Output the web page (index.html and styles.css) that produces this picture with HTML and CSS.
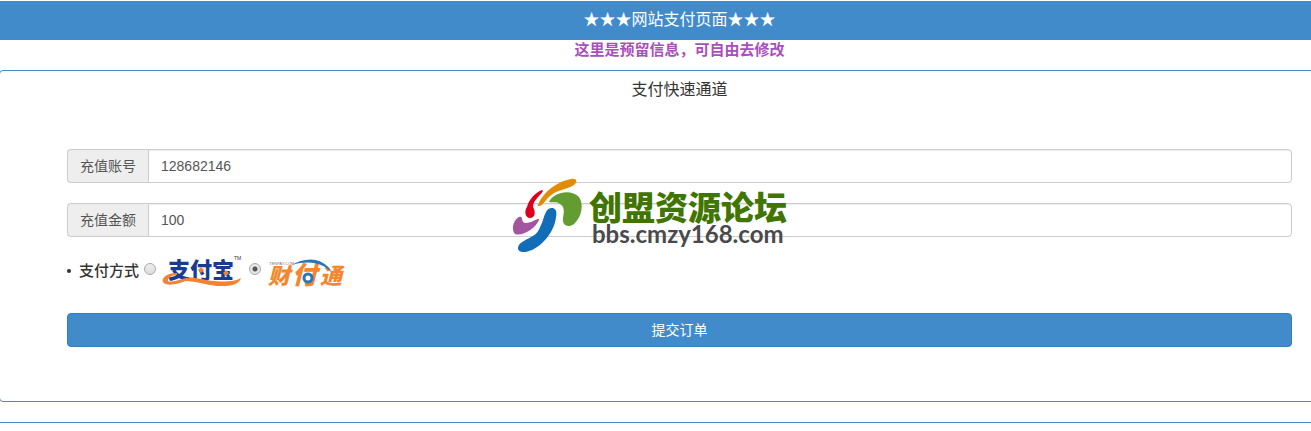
FILE: index.html
```html
<!DOCTYPE html>
<html lang="zh-CN">
<head>
  <meta charset="UTF-8">
  <meta name="viewport" content="width=device-width, initial-scale=1.0">
  <title>网站支付页面</title>
  <link rel="stylesheet" href="styles.css">
</head>
<body>
  <div class="page">
    <header class="top-bar">★★★网站支付页面★★★</header>
    <p class="notice">这里是预留信息，可自由去修改</p>
    <main class="panel">
      <h1 class="panel-title">支付快速通道</h1>
      <form class="pay-form">
        <div class="input-group">
          <label class="input-addon" for="account">充值账号</label>
          <input class="form-control" type="text" id="account" name="account" value="128682146">
        </div>
        <div class="input-group">
          <label class="input-addon" for="money">充值金额</label>
          <input class="form-control" type="text" id="money" name="money" value="100">
        </div>
        <div class="pay-type" role="radiogroup" aria-labelledby="pay-label">
          <span class="pay-dot"></span>
          <span class="pay-label" id="pay-label">支付方式</span>
          <input class="pay-radio" type="radio" name="type" value="alipay" id="alipay">
          <label class="pay-logo" for="alipay">
            <svg width="84" height="34" viewBox="0 0 84 34" role="img" aria-label="支付宝">
              <text class="alipay-text" x="8" y="24">支付宝</text>
              <path d="M17 19C7 19 1 24 3 28C6 33 19 30 25 27C37 27 51 33 65 32C75 32 80 28 81 24C74 28 65 28 54 27C43 26 33 22 26 24C19 26 9 29 8 27C7 24 12 21 17 21Z" fill="#f58233"/>
              <path d="M41 13l3 3-3 3-3-3zM66 16l3 3-3 3-3-3z" fill="#f58233"/>
              <text class="tm-text" x="74" y="6">TM</text>
            </svg>
          </label>
          <input class="pay-radio" type="radio" name="type" value="tenpay" id="tenpay" checked>
          <label class="pay-logo" for="tenpay">
            <svg width="84" height="34" viewBox="0 0 84 34" role="img" aria-label="财付通">
              <text class="tenpay-text" y="30"><tspan x="3">财</tspan><tspan class="tenpay-big" x="27">付</tspan><tspan x="55">通</tspan></text>
              <text class="tenpay-url" x="4" y="11">TENPAY.COM</text>
              <path d="M27 11C39 3 59 2 67 19C58 9 45 6 27 11Z" fill="#2b76ba"/>
              <circle cx="43" cy="24" r="4" fill="#fff" stroke="#2b76ba" stroke-width="3"/>
            </svg>
          </label>
        </div>
        <button class="submit-btn" type="submit">提交订单</button>
      </form>
    </main>
    <div class="panel-next"></div>
    <div class="watermark">
      <svg width="290" height="80" viewBox="0 0 290 80" role="img" aria-label="创盟资源论坛">
        <path d="M26 28C30 17 43 5 59 2C65 1 66 5 62 8C55 13 46 12 38 19C33 23 31 29 27 29C25 29 25 29 26 28Z" fill="#e48b06"/>
        <path d="M37 25C42 14 60 12 67 20C72 27 70 40 62 47C55 52 50 47 51 41C52 35 53 30 48 27C44 24 41 26 37 25Z" fill="#639d32"/>
        <path d="M30 13C24 15 17 22 15 30C12 34 13 41 18 41C23 41 24 35 21 30C21 23 29 18 31 14Z" fill="#de001c"/>
        <path d="M7 40C1 43 -1 53 3 57C10 60 24 51 27 43C28 39 21 46 14 46C8 46 12 38 7 40Z" fill="#a256a0"/>
        <path d="M41 31C35 30 33 36 31 43C28 51 26 57 19 60C14 63 6 66 6 71C6 76 13 76 20 73C33 67 43 52 44 40C45 35 44 32 41 31Z" fill="#126db9"/>
        <text class="mark-name" x="77" y="43">创盟资源论坛</text>
        <text class="mark-url" x="80" y="66">bbs.cmzy168.com</text>
      </svg>
    </div>
  </div>
</body>
</html>
```
FILE: styles.css
```css
* { box-sizing: border-box; }
html, body {
  margin: 0;
  padding: 0;
}
body {
  overflow: hidden;
  background: #fff;
  color: #333;
  font-family: "Liberation Sans", "Noto Sans CJK SC", sans-serif;
  font-size: 14px;
  line-height: 20px;
}
.page {
  position: relative;
  width: calc(100% + 48px);
  padding-top: 1px;
}
.top-bar {
  padding: 9px 0 10px;
  background: #428bca;
  color: #fff;
  font-size: 16px;
  text-align: center;
}
.notice {
  margin: 0;
  padding-bottom: 10px;
  color: #a94fbd;
  font-size: 15px;
  font-weight: bold;
  text-align: center;
}
.panel {
  margin: 0 -1px 20px;
  padding: 9px 67px 54px;
  border: 1px solid #428bca;
  border-radius: 4px;
}
.panel-title {
  margin: 0 0 49px;
  font-size: 16px;
  font-weight: normal;
  text-align: center;
}
.pay-form {
  display: flex;
  flex-direction: column;
}
.input-group {
  display: flex;
  height: 34px;
  margin-bottom: 20px;
}
.input-addon {
  padding: 6px 12px;
  background: #eee;
  border: 1px solid #ccc;
  border-right: 0;
  border-radius: 4px 0 0 4px;
  color: #555;
}
.form-control {
  flex: 1;
  min-width: 0;
  padding: 6px 12px;
  background: #fff;
  border: 1px solid #ccc;
  border-radius: 0 4px 4px 0;
  box-shadow: inset 0 1px 1px rgba(0,0,0,0.075);
  color: #555;
  font: inherit;
}
.pay-type {
  display: flex;
  align-items: center;
  height: 28px;
  margin-bottom: 28px;
}
.pay-dot {
  width: 4px;
  height: 4px;
  margin-right: 8px;
  border-radius: 50%;
  background: #333;
}
.pay-label {
  margin-right: 5px;
  font-size: 15px;
  font-weight: 500;
}
.pay-radio {
  appearance: none;
  width: 12px;
  height: 12px;
  margin: 0 4px 4px 0;
  border: 1px solid #aaa;
  border-radius: 50%;
  background: linear-gradient(#eee, #ddd);
}
.pay-radio:checked {
  background: radial-gradient(circle, #555 0 2px, #e6e6e6 3px);
}
.pay-logo {
  display: flex;
  margin-right: 5px;
}
.pay-logo svg {
  overflow: visible;
}
.alipay-text {
  fill: #173c91;
  font-family: "Noto Sans CJK SC", sans-serif;
  font-size: 22px;
  font-weight: 900;
}
.tm-text {
  fill: #333;
  font-size: 5px;
}
.tenpay-text {
  fill: #f4872b;
  font-family: "Noto Sans CJK SC", sans-serif;
  font-size: 22px;
  font-style: italic;
  font-weight: 900;
}
.tenpay-big {
  font-size: 25px;
}
.tenpay-url {
  fill: #777;
  font-size: 4px;
}
.submit-btn {
  height: 34px;
  padding: 6px 12px;
  background: #428bca;
  border: 1px solid #357ebd;
  border-radius: 4px;
  color: #fff;
  font: inherit;
  cursor: pointer;
}
.panel-next {
  height: 9px;
  border-top: 1px solid #428bca;
}
/* site mark floats over the form */
.watermark {
  position: absolute;
  top: 177px;
  left: 50%;
  margin-left: -168px;
  pointer-events: none;
}
.mark-name {
  fill: #407500;
  font-family: "Noto Sans CJK SC", sans-serif;
  font-size: 33px;
  font-weight: 900;
}
.mark-url {
  fill: #4a4a4c;
  font-family: Lato, sans-serif;
  font-size: 24px;
  font-weight: bold;
}
```
